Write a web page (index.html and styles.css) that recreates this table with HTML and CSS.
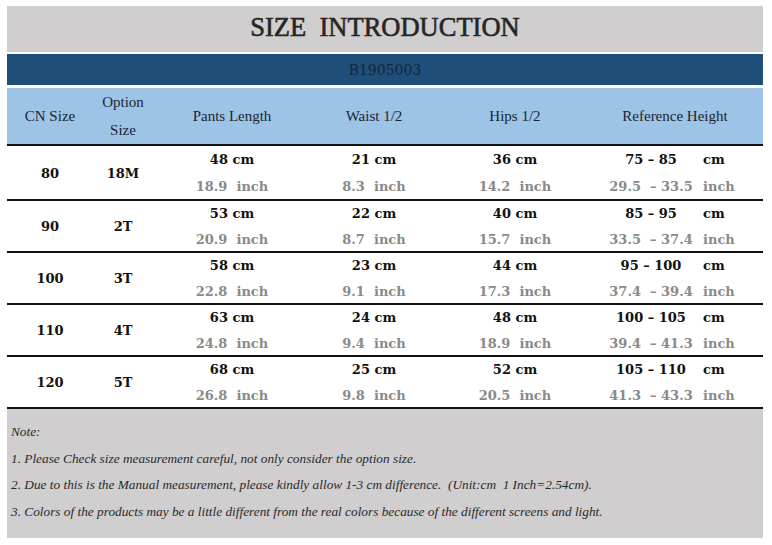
FILE: index.html
```html
<!DOCTYPE html>
<html lang="en">
<head>
<meta charset="utf-8">
<title>Size Introduction</title>
<link rel="stylesheet" href="styles.css">
</head>
<body>
<div class="sheet">
  <div class="title">SIZE&nbsp;&nbsp;INTRODUCTION</div>
  <div class="code">B1905003</div>
  <div class="grid headrow">
    <div class="head">CN Size</div>
    <div class="head option"><span>Option</span><span>Size</span></div>
    <div class="head">Pants Length</div>
    <div class="head">Waist 1/2</div>
    <div class="head">Hips 1/2</div>
    <div class="head">Reference Height</div>
  </div>

  <div class="grid row first">
    <div class="cell single">80</div>
    <div class="cell single">18M</div>
    <div class="cell"><span class="cm">48 cm</span><span class="inch">18.9&nbsp; inch</span></div>
    <div class="cell"><span class="cm">21 cm</span><span class="inch">8.3&nbsp; inch</span></div>
    <div class="cell"><span class="cm">36 cm</span><span class="inch">14.2&nbsp; inch</span></div>
    <div class="cell ref">
      <span class="range cm">75 – 85</span><span class="unit cm">cm</span>
      <span class="range inch">29.5&nbsp; – 33.5</span><span class="unit inch">inch</span>
    </div>
  </div>

  <div class="grid row">
    <div class="cell single">90</div>
    <div class="cell single">2T</div>
    <div class="cell"><span class="cm">53 cm</span><span class="inch">20.9&nbsp; inch</span></div>
    <div class="cell"><span class="cm">22 cm</span><span class="inch">8.7&nbsp; inch</span></div>
    <div class="cell"><span class="cm">40 cm</span><span class="inch">15.7&nbsp; inch</span></div>
    <div class="cell ref">
      <span class="range cm">85 – 95</span><span class="unit cm">cm</span>
      <span class="range inch">33.5&nbsp; – 37.4</span><span class="unit inch">inch</span>
    </div>
  </div>

  <div class="grid row">
    <div class="cell single">100</div>
    <div class="cell single">3T</div>
    <div class="cell"><span class="cm">58 cm</span><span class="inch">22.8&nbsp; inch</span></div>
    <div class="cell"><span class="cm">23 cm</span><span class="inch">9.1&nbsp; inch</span></div>
    <div class="cell"><span class="cm">44 cm</span><span class="inch">17.3&nbsp; inch</span></div>
    <div class="cell ref">
      <span class="range cm">95 – 100</span><span class="unit cm">cm</span>
      <span class="range inch">37.4&nbsp; – 39.4</span><span class="unit inch">inch</span>
    </div>
  </div>

  <div class="grid row">
    <div class="cell single">110</div>
    <div class="cell single">4T</div>
    <div class="cell"><span class="cm">63 cm</span><span class="inch">24.8&nbsp; inch</span></div>
    <div class="cell"><span class="cm">24 cm</span><span class="inch">9.4&nbsp; inch</span></div>
    <div class="cell"><span class="cm">48 cm</span><span class="inch">18.9&nbsp; inch</span></div>
    <div class="cell ref">
      <span class="range cm">100 – 105</span><span class="unit cm">cm</span>
      <span class="range inch">39.4&nbsp; – 41.3</span><span class="unit inch">inch</span>
    </div>
  </div>

  <div class="grid row">
    <div class="cell single">120</div>
    <div class="cell single">5T</div>
    <div class="cell"><span class="cm">68 cm</span><span class="inch">26.8&nbsp; inch</span></div>
    <div class="cell"><span class="cm">25 cm</span><span class="inch">9.8&nbsp; inch</span></div>
    <div class="cell"><span class="cm">52 cm</span><span class="inch">20.5&nbsp; inch</span></div>
    <div class="cell ref">
      <span class="range cm">105 – 110</span><span class="unit cm">cm</span>
      <span class="range inch">41.3&nbsp; – 43.3</span><span class="unit inch">inch</span>
    </div>
  </div>

  <div class="note">
    <p>Note:</p>
    <p>1. Please Check size measurement careful, not only consider the option size.</p>
    <p>2. Due to this is the Manual measurement, please kindly allow 1-3 cm difference.&nbsp; (Unit:cm&nbsp; 1 Inch=2.54cm).</p>
    <p>3. Colors of the products may be a little different from the real colors because of the different screens and light.</p>
  </div>
</div>
</body>
</html>
```

FILE: styles.css
```css
html, body {
  margin: 0;
  padding: 0;
  background: #ffffff;
}

.sheet {
  width: 756px;
  margin: 6px 0 0 7px;
  display: flex;
  flex-direction: column;
  font-family: "Liberation Serif", "Times New Roman", serif;
}

.title {
  height: 46px;
  background: #d0cecf;
  color: #262626;
  font-size: 26.5px;
  font-weight: normal;
  -webkit-text-stroke: 0.6px #262626;
  display: flex;
  align-items: center;
  justify-content: center;
  padding-bottom: 4px;
  box-sizing: border-box;
}

.code {
  margin-top: 2px;
  height: 31px;
  background: #1f4e79;
  color: #13263a;
  font-family: "DejaVu Serif", serif;
  font-size: 14px;
  display: flex;
  align-items: center;
  justify-content: center;
}

.grid {
  display: grid;
  grid-template-columns: 86px 66px 146px 138px 144px 176px;
}

.headrow {
  margin-top: 3px;
}

.head {
  height: 56px;
  background: #9dc3e6;
  color: #1a2533;
  font-size: 15px;
  display: flex;
  align-items: center;
  justify-content: center;
  border-bottom: 2px solid #111;
}

.head.option {
  flex-direction: column;
  line-height: 28px;
  padding-right: 6px;
}

.row {
  height: 52px;
  border-bottom: 2px solid #111;
  box-sizing: border-box;
}

.row.first {
  height: 55px;
}

.cell {
  display: flex;
  flex-direction: column;
  align-items: center;
  justify-content: center;
  font-family: "DejaVu Serif", serif;
  font-weight: bold;
  font-size: 13px;
  line-height: 26px;
  color: #111;
}

.row .cell:nth-child(2) {
  padding-right: 6px;
}

.first .cell {
  line-height: 27px;
}

.cm {
  color: #111;
}

.inch {
  color: #8a8a8a;
}

.cell.ref {
  display: grid;
  grid-template-columns: 104px 56px;
  align-content: center;
  padding-left: 8px;
}

.range {
  text-align: center;
}

.unit {
  padding-left: 0;
}

.note {
  height: 129px;
  background: #d0cecf;
  color: #2a2a2a;
  font-style: italic;
  font-size: 13.3px;
  padding: 10px 4px 0 4px;
  box-sizing: border-box;
}

.note p {
  margin: 0;
  line-height: 26.5px;
}
```
